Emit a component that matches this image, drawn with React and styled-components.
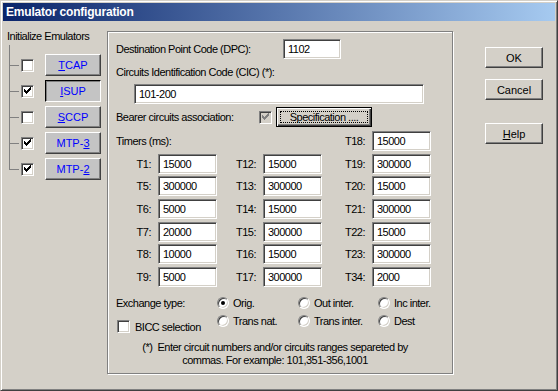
import React from "react";
import styled, { createGlobalStyle, css } from "styled-components";

const GlobalStyle = createGlobalStyle`
  body {
    margin: 0;
    font-family: "Liberation Sans", Arial, sans-serif;
    font-size: 11px;
  }
`;

const emulators = [
  { checked: false, pre: "", key: "T", post: "CAP" },
  { checked: true, pre: "", key: "I", post: "SUP", pressed: true },
  { checked: false, pre: "", key: "S", post: "CCP" },
  { checked: true, pre: "MTP-", key: "3", post: "" },
  { checked: true, pre: "MTP-", key: "2", post: "" },
];

const timers = [
  [
    ["T1:", "15000"],
    ["T5:", "300000"],
    ["T6:", "5000"],
    ["T7:", "20000"],
    ["T8:", "10000"],
    ["T9:", "5000"],
  ],
  [
    ["T12:", "15000"],
    ["T13:", "300000"],
    ["T14:", "15000"],
    ["T15:", "300000"],
    ["T16:", "15000"],
    ["T17:", "300000"],
  ],
  [
    ["T18:", "15000"],
    ["T19:", "300000"],
    ["T20:", "15000"],
    ["T21:", "300000"],
    ["T22:", "15000"],
    ["T23:", "300000"],
    ["T34:", "2000"],
  ],
];

const exchangeTypes = [
  ["Orig.", true],
  ["Out inter.", false],
  ["Inc inter.", false],
  ["Trans nat.", false],
  ["Trans inter.", false],
  ["Dest", false],
];

function CheckMark({ color = "#000" }) {
  return (
    <svg width="9" height="9" viewBox="0 0 9 9" shapeRendering="crispEdges">
      <path
        d="M1 3h1v1h1v1h1V4h1V3h1V2h1V1h1v3h-1v1h-1v1h-1v1h-1v1h-1V7H2V6H1z"
        fill={color}
      />
    </svg>
  );
}

export default function App() {
  return (
    <>
      <GlobalStyle />
      <Window>
        <TitleBar>Emulator configuration</TitleBar>
        <Body>
          <LeftPanel>
            <PanelTitle>Initialize Emulators</PanelTitle>
            <Tree>
              {emulators.map((em) => (
                <TreeRow key={em.pre + em.key + em.post}>
                  <Branch />
                  <CheckBox>{em.checked && <CheckMark />}</CheckBox>
                  <EmuButton $pressed={em.pressed}>
                    {em.pre}
                    <u>{em.key}</u>
                    {em.post}
                  </EmuButton>
                </TreeRow>
              ))}
            </Tree>
          </LeftPanel>

          <GroupBox>
            <DpcRow>
              <DpcLabel>Destination Point Code (DPC):</DpcLabel>
              <Field $width={58} defaultValue="1102" readOnly />
            </DpcRow>
            <CicLabel>Circuits Identification Code (CIC) (*):</CicLabel>
            <CicField $width={290} defaultValue="101-200" readOnly />
            <BearerRow>
              <BearerLabel>Bearer circuits association:</BearerLabel>
              <CheckBox $disabled>
                <CheckMark color="#808080" />
              </CheckBox>
              <DefaultButton>
                <FocusRect>Specification ....</FocusRect>
              </DefaultButton>
            </BearerRow>

            <TimerGrid>
              <TimersTitle>Timers (ms):</TimersTitle>
              {timers.map((col, ci) =>
                col.map(([label, value], ri) => (
                  <TimerCell
                    key={label}
                    style={{
                      gridColumn: ci + 1,
                      gridRow: ci === 2 ? ri + 1 : ri + 2,
                    }}
                  >
                    <TimerLabel $width={[35, 40, 43][ci]}>{label}</TimerLabel>
                    <Field $width={59} defaultValue={value} readOnly />
                  </TimerCell>
                ))
              )}
            </TimerGrid>

            <ExchangeArea>
              <ExchangeLeft>
                <ExchangeLabel>Exchange type:</ExchangeLabel>
                <BiccRow>
                  <CheckBox />
                  <span>BICC selection</span>
                </BiccRow>
              </ExchangeLeft>
              <RadioGrid>
                {exchangeTypes.map(([label, on]) => (
                  <RadioItem key={label}>
                    <Radio $on={on} />
                    <span>{label}</span>
                  </RadioItem>
                ))}
              </RadioGrid>
            </ExchangeArea>

            <Note>
              {"(*)  Enter circuit numbers and/or circuits ranges separeted by"}
              <br />
              {"commas. For example: 101,351-356,1001"}
            </Note>
          </GroupBox>

          <RightPanel>
            <PushButton>OK</PushButton>
            <PushButton>Cancel</PushButton>
            <PushButton $gapTop={23}>
              <u>H</u>elp
            </PushButton>
          </RightPanel>
        </Body>
      </Window>
    </>
  );
}

const raised = css`
  border: 1px solid;
  border-color: #fff #404040 #404040 #fff;
  box-shadow: inset -1px -1px #808080;
`;

const sunken = css`
  border: 1px solid;
  border-color: #808080 #fff #fff #808080;
  box-shadow: inset 1px 1px #404040, inset -1px -1px #d4d0c8;
`;

const Window = styled.div`
  width: 558px;
  height: 391px;
  box-sizing: border-box;
  padding: 2px;
  background: #d4d0c8;
  border: 1px solid;
  border-color: #d4d0c8 #404040 #404040 #d4d0c8;
  box-shadow: inset 1px 1px #fff, inset -1px -1px #808080;
  display: flex;
  flex-direction: column;
  letter-spacing: -0.5px;
  color: #000;
`;

const TitleBar = styled.div`
  height: 18px;
  flex-shrink: 0;
  display: flex;
  align-items: center;
  padding-left: 3px;
  background: linear-gradient(to right, #0a246a, #a6caf0);
  color: #fff;
  font-weight: bold;
  font-size: 12px;
  letter-spacing: -0.2px;
`;

const Body = styled.div`
  flex: 1;
  display: flex;
  align-items: flex-start;
`;

const LeftPanel = styled.div`
  width: 104px;
  box-sizing: border-box;
  padding-left: 4px;
  padding-top: 9px;
`;

const PanelTitle = styled.div`
  line-height: 13px;
`;

const Tree = styled.div`
  position: relative;
  margin-top: 2px;
  margin-left: 2px;
  padding-top: 9px;
  display: flex;
  flex-direction: column;
  gap: 4px;

  &::before {
    content: "";
    position: absolute;
    left: 0;
    top: 0;
    bottom: 11px;
    width: 1px;
    background: #808080;
  }
`;

const TreeRow = styled.div`
  height: 22px;
  display: flex;
  align-items: center;
`;

const Branch = styled.div`
  width: 10px;
  height: 1px;
  background: #808080;
  margin-right: 2px;
`;

const CheckBox = styled.div`
  width: 13px;
  height: 13px;
  box-sizing: border-box;
  flex-shrink: 0;
  ${sunken};
  background: ${(p) => (p.$disabled ? "#d4d0c8" : "#fff")};
  display: flex;
  align-items: center;
  justify-content: center;
  padding: 0 1px 1px 0;
`;

const EmuButton = styled.div`
  width: 56px;
  height: 22px;
  box-sizing: border-box;
  margin-left: 11px;
  background: #c4c4c4;
  color: #0000ff;
  display: flex;
  align-items: center;
  justify-content: center;
  font-size: 11px;
  letter-spacing: 0;
  ${(p) =>
    p.$pressed
      ? css`
          border: 1px solid;
          border-color: #000 #fff #fff #000;
          box-shadow: inset 1px 1px #808080;
        `
      : raised};
`;

const GroupBox = styled.div`
  width: 346px;
  height: 343px;
  box-sizing: border-box;
  margin-top: 10px;
  border: 1px solid #808080;
  box-shadow: inset 1px 1px #fff, 1px 1px #fff;
  padding: 0 0 0 8px;
  display: flex;
  flex-direction: column;
  align-items: flex-start;
`;

const DpcRow = styled.div`
  display: flex;
  align-items: center;
  margin-top: 7px;
`;

const DpcLabel = styled.span`
  width: 167px;
`;

const Field = styled.input`
  width: ${(p) => p.$width}px;
  height: 20px;
  box-sizing: border-box;
  ${sunken};
  background: #fff;
  padding: 0 0 0 4px;
  margin: 0;
  font-family: "Liberation Sans", Arial, sans-serif;
  font-size: 11px;
  letter-spacing: -0.5px;
  color: #000;
  outline: none;
`;

const CicLabel = styled.div`
  line-height: 13px;
  margin-top: 7px;
`;

const CicField = styled(Field)`
  margin-top: 5px;
  margin-left: 18px;
`;

const BearerRow = styled.div`
  display: flex;
  align-items: center;
  margin-top: 3px;
`;

const BearerLabel = styled.span`
  width: 143px;
`;

const DefaultButton = styled.div`
  width: 96px;
  height: 20px;
  box-sizing: border-box;
  margin-left: 4px;
  border: 1px solid #000;
  background: #d4d0c8;
  box-shadow: inset 1px 1px #fff, inset -1px -1px #404040, inset -2px -2px #808080;
  padding: 3px;
  display: flex;
`;

const FocusRect = styled.div`
  flex: 1;
  border: 1px dotted #000;
  display: flex;
  align-items: center;
  justify-content: center;
  font-size: 11px;
`;

const TimerGrid = styled.div`
  display: grid;
  grid-template-columns: 101px 105px 109px;
  grid-auto-rows: 20px;
  row-gap: 2.7px;
  margin-top: 4px;
`;

const TimersTitle = styled.div`
  grid-column: 1 / 3;
  grid-row: 1;
  display: flex;
  align-items: center;
`;

const TimerCell = styled.div`
  display: flex;
  align-items: center;
`;

const TimerLabel = styled.span`
  width: ${(p) => p.$width}px;
  text-align: right;
  margin-right: 7px;
`;

const ExchangeArea = styled.div`
  display: flex;
  margin-top: 7px;
`;

const ExchangeLeft = styled.div`
  width: 101px;
  display: flex;
  flex-direction: column;
`;

const ExchangeLabel = styled.div`
  height: 18px;
  display: flex;
  align-items: center;
`;

const BiccRow = styled.div`
  display: flex;
  align-items: center;
  gap: 5px;
  margin-top: 8px;
  margin-left: 1px;
`;

const RadioGrid = styled.div`
  display: grid;
  grid-template-columns: 81px 80px 80px;
  grid-auto-rows: 18px;
`;

const RadioItem = styled.div`
  display: flex;
  align-items: center;
  gap: 4px;
`;

const Radio = styled.div`
  width: 12px;
  height: 12px;
  box-sizing: border-box;
  border-radius: 50%;
  border: 1px solid;
  border-color: #808080 #fff #fff #808080;
  box-shadow: inset 1px 1px #404040, inset -1px -1px #d4d0c8;
  background: #fff;
  display: flex;
  align-items: center;
  justify-content: center;

  &::after {
    content: "";
    width: 4px;
    height: 4px;
    border-radius: 50%;
    background: #000;
    display: ${(p) => (p.$on ? "block" : "none")};
  }
`;

const Note = styled.div`
  align-self: stretch;
  text-align: center;
  line-height: 13px;
  white-space: pre;
  margin-top: 8px;
  padding-right: 18px;
`;

const RightPanel = styled.div`
  margin-left: 32px;
  margin-top: 26px;
  display: flex;
  flex-direction: column;
  gap: 11px;
`;

const PushButton = styled.div`
  width: 58px;
  height: 21px;
  box-sizing: border-box;
  ${raised};
  background: #d4d0c8;
  display: flex;
  align-items: center;
  justify-content: center;
  letter-spacing: 0;
  margin-top: ${(p) => (p.$gapTop ? p.$gapTop - 11 : 0)}px;
`;
